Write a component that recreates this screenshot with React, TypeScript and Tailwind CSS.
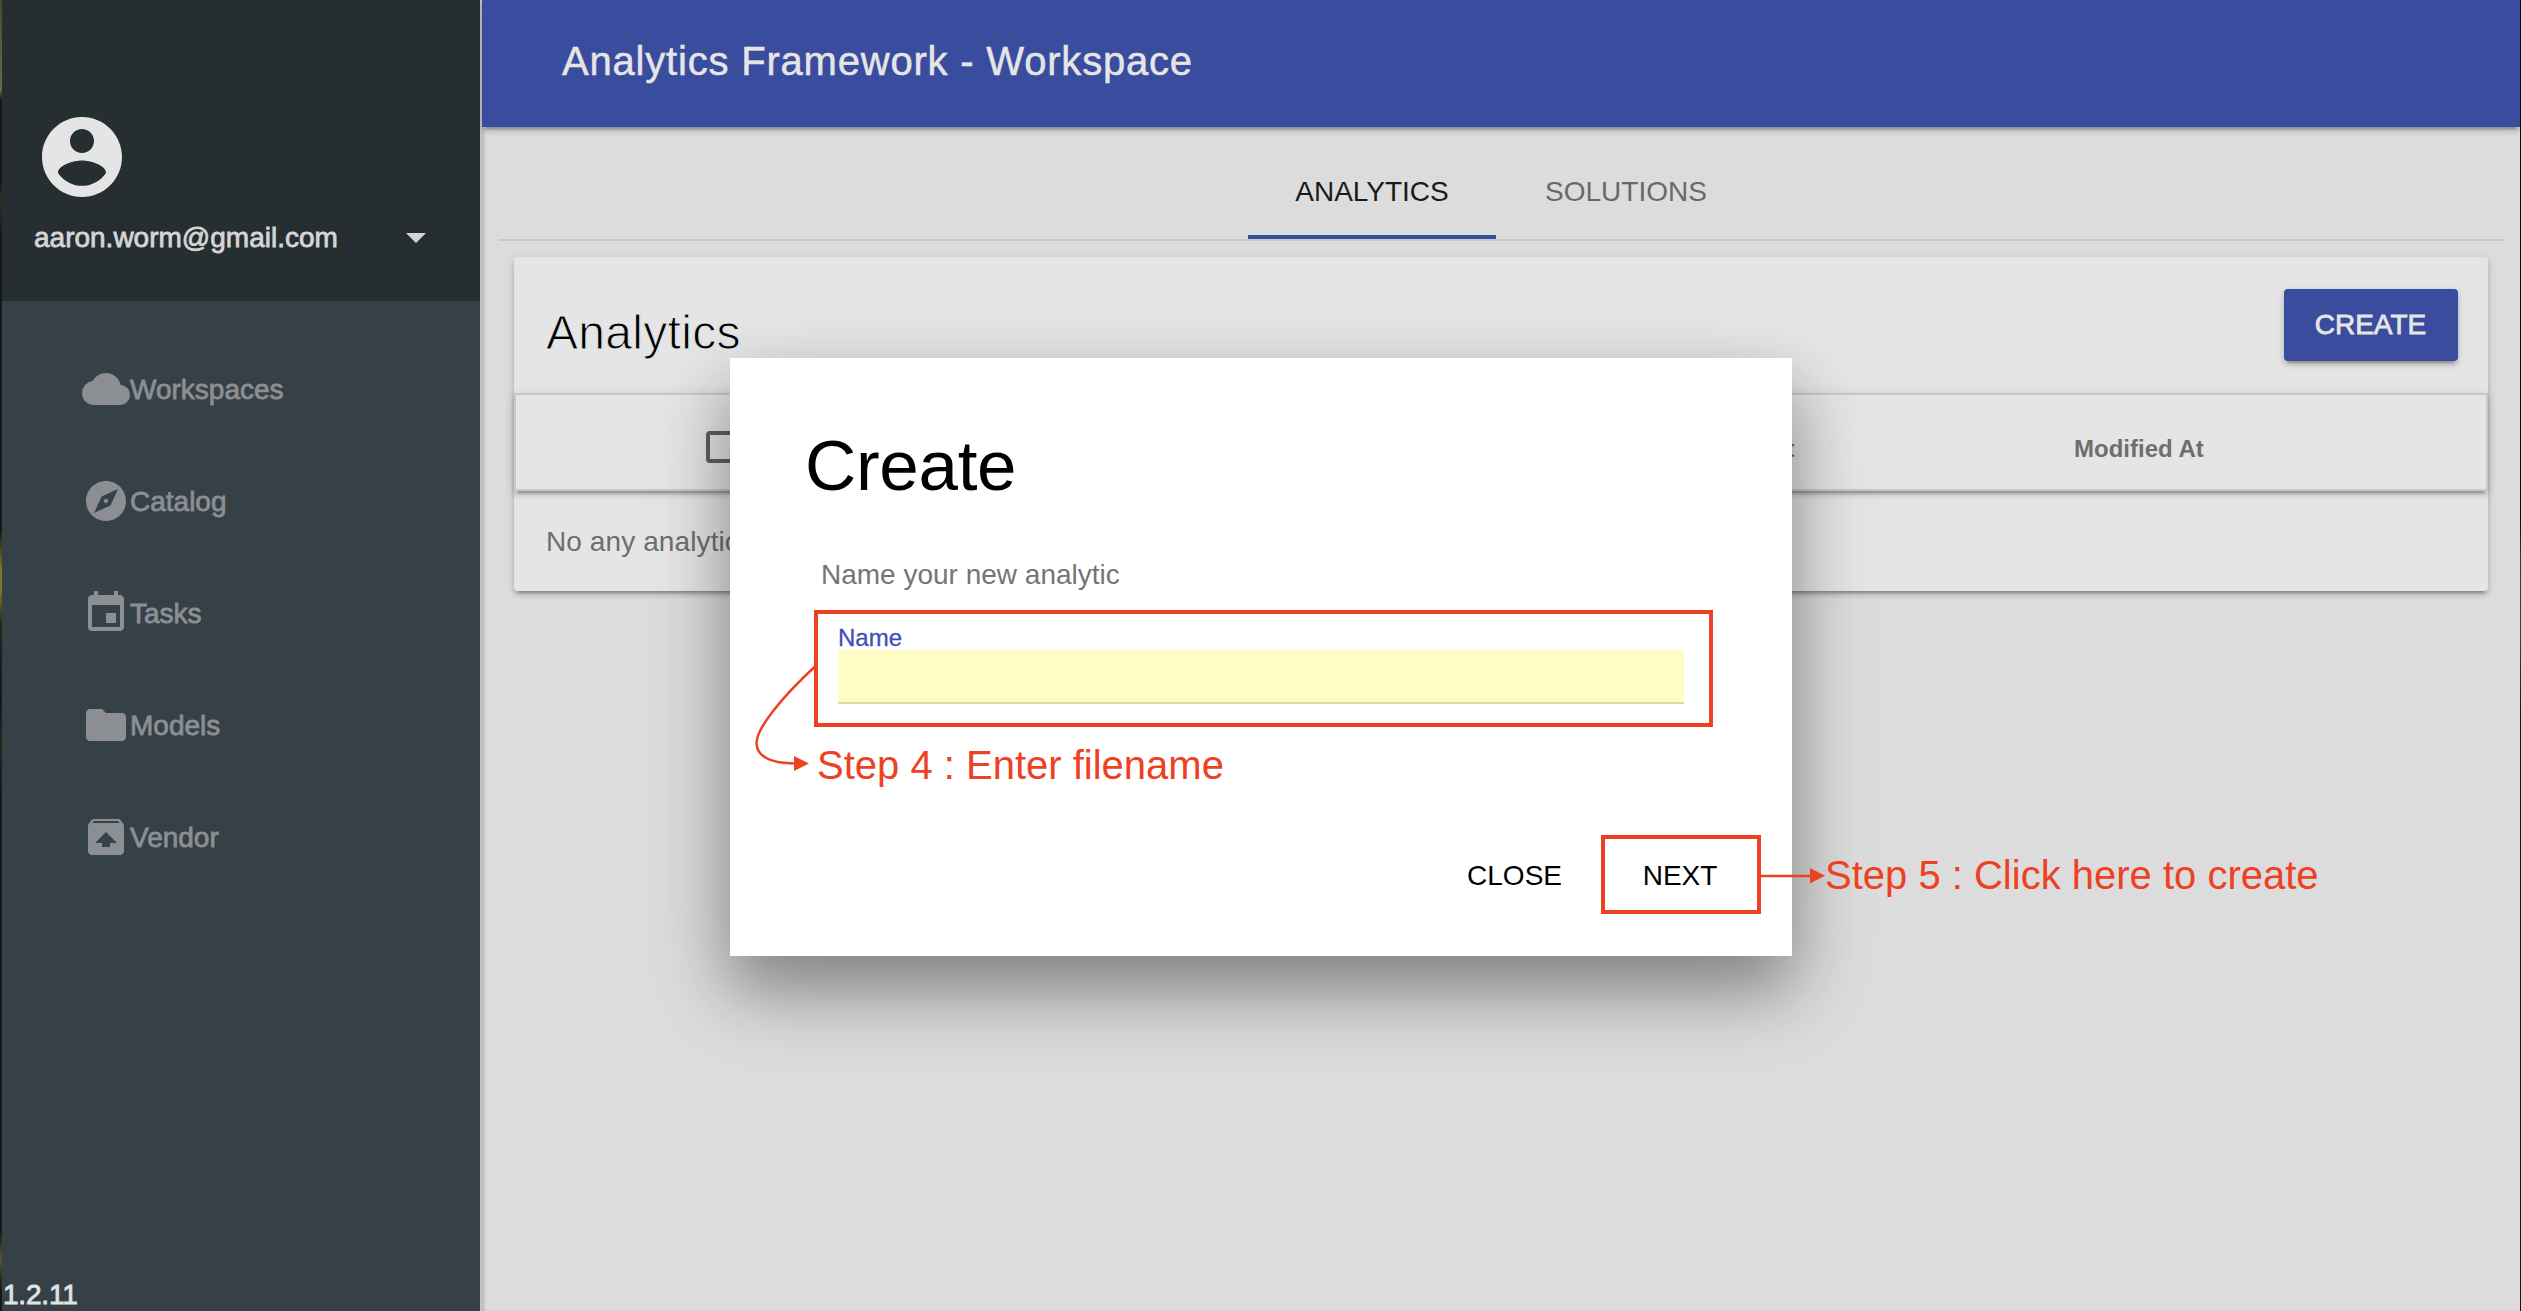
import type { ReactNode, SVGProps } from "react";
import {
  MdArrowDropDown,
  MdCloud,
  MdEvent,
  MdExplore,
  MdFolder,
} from "react-icons/md";

function AccountCircle(props: SVGProps<SVGSVGElement>) {
  return (
    <svg viewBox="0 0 24 24" fill="currentColor" {...props}>
      <path d="M12 2C6.48 2 2 6.48 2 12s4.48 10 10 10 10-4.48 10-10S17.52 2 12 2zm0 3c1.66 0 3 1.34 3 3s-1.34 3-3 3-3-1.34-3-3 1.34-3 3-3zm0 14.2c-2.5 0-4.71-1.28-6-3.22.03-1.99 4-3.08 6-3.08 1.99 0 5.97 1.09 6 3.08-1.29 1.94-3.5 3.22-6 3.22z" />
    </svg>
  );
}

function Unarchive(props: SVGProps<SVGSVGElement>) {
  return (
    <svg viewBox="0 0 24 24" fill="currentColor" {...props}>
      <path d="M20.55 5.22l-1.39-1.68C18.88 3.21 18.47 3 18 3H6c-.47 0-.88.21-1.15.55L3.46 5.22C3.17 5.57 3 6.01 3 6.5V19c0 1.1.89 2 2 2h14c1.1 0 2-.9 2-2V6.5c0-.49-.17-.93-.45-1.28zM12 9.5l5.5 5.5H14v2h-4v-2H6.5L12 9.5zM5.12 5l.82-1h12l.93 1H5.12z" />
    </svg>
  );
}

const navItems = [
  { label: "Workspaces", Icon: MdCloud },
  { label: "Catalog", Icon: MdExplore },
  { label: "Tasks", Icon: MdEvent },
  { label: "Models", Icon: MdFolder },
  { label: "Vendor", Icon: Unarchive },
];

function Sidebar() {
  return (
    <aside className="flex w-[478px] shrink-0 flex-col bg-[#364047]">
      <div className="h-[301px] bg-[#262e31] pt-[109px] pl-8">
        <AccountCircle className="size-24 text-[#e5e5e5]" />
        <div className="mt-2 flex h-12 items-center text-[#d4d5d6]">
          <span className="w-[358px] pt-px text-[28px] leading-8 [-webkit-text-stroke:0.8px_#d4d5d6]">
            aaron.worm@gmail.com
          </span>
          <MdArrowDropDown className="size-12" />
        </div>
      </div>
      <nav className="pt-8 pl-20 text-[#8b8f93]">
        {navItems.map(({ label, Icon }) => (
          <a key={label} className="flex h-28 items-center">
            <Icon className="size-12" />
            <span className="pt-px text-[28px] leading-8 [-webkit-text-stroke:0.8px_#8b8f93]">{label}</span>
          </a>
        ))}
      </nav>
      <div className="mt-auto pl-px text-[28px] leading-8 tracking-[-0.2px] text-[#e2e2e2] [-webkit-text-stroke:0.8px_#e2e2e2]">
        1.2.11
      </div>
    </aside>
  );
}

function Tab({ active, children }: { active?: boolean; children: ReactNode }) {
  return (
    <div
      className={
        active
          ? "flex h-full w-[248px] items-center justify-center border-b-4 border-[#394c9d] pt-[21px] text-[#1a1a1a]"
          : "flex h-full w-[258px] items-center justify-center pt-[17px] pl-0.5 text-[#696969]"
      }
    >
      <span className="text-[28px] leading-8">{children}</span>
    </div>
  );
}

function Workspace() {
  return (
    <main className="flex min-w-0 flex-1 flex-col bg-[#dcdcdc] shadow-[inset_3px_0_4px_-2px_rgba(0,0,0,0.25)]">
      <header className="relative flex h-[127px] items-center bg-[#394c9d] pl-20 shadow-[0_4px_4px_rgba(0,0,0,0.14),0_2px_10px_rgba(0,0,0,0.12),0_6px_2px_-4px_rgba(0,0,0,0.2)]">
        <h1 className="-mt-1.5 text-[40px] leading-[48px] tracking-[0.8px] text-[#e5e5e5] [-webkit-text-stroke:0.5px_#e5e5e5]">
          Analytics Framework - Workspace
        </h1>
      </header>
      <div className="mr-4 ml-4 flex h-[114px] justify-center border-b-2 border-[#c8c8c8]">
        <Tab active>ANALYTICS</Tab>
        <Tab>SOLUTIONS</Tab>
      </div>
      <section className="mt-4 mr-8 ml-8 h-[334px] rounded-[4px] bg-[#e5e5e5] shadow-[0_4px_4px_rgba(0,0,0,0.14),0_2px_10px_rgba(0,0,0,0.12),0_6px_2px_-4px_rgba(0,0,0,0.2)]">
        <div className="flex h-[136px] items-start justify-between pt-8 pr-[30px] pl-8">
          <h2 className="mt-4 text-[48px] leading-[56px] tracking-[0.3px] text-black [-webkit-text-stroke:1px_#e5e5e5]">
            Analytics
          </h2>
          <button className="h-[72px] w-[174px] rounded-[4px] bg-[#394c9d] pr-px text-[28px] leading-8 text-[#e5e5e5] shadow-[0_4px_4px_rgba(0,0,0,0.14),0_2px_10px_rgba(0,0,0,0.12),0_6px_2px_-4px_rgba(0,0,0,0.2)] [-webkit-text-stroke:0.8px_#e5e5e5]">
            CREATE
          </button>
        </div>
        <div className="flex h-[98px] items-center border-2 border-[#c8c8c8] pl-[190px] text-2xl leading-7 font-bold text-[#6e6e6e] shadow-[0_4px_4px_rgba(0,0,0,0.14),0_2px_10px_rgba(0,0,0,0.12),0_6px_2px_-4px_rgba(0,0,0,0.2)]">
          <span className="mt-2.5 size-8 rounded-[4px] border-4 border-[#606060]" />
          <span className="mt-[13px] ml-[936px] w-[400px]">Created At</span>
          <span className="mt-[13px]">Modified At</span>
        </div>
        <p className="pt-[35px] pl-8 text-[28px] leading-8 tracking-[0.1px] text-[#6e6e6e]">
          No any analytics
        </p>
      </section>
    </main>
  );
}

function CreateDialog() {
  return (
    <div className="absolute top-[358px] left-[730px] flex h-[598px] w-[1062px] flex-col bg-white shadow-[0_32px_56px_rgba(0,0,0,0.23),0_34px_80px_rgba(0,0,0,0.23)]">
      <h2 className="mt-[68px] ml-[75px] text-[71px] leading-[80px] tracking-[-0.3px] text-black">Create</h2>
      <p className="mt-[53px] ml-[91px] text-[28px] leading-8 text-[#757575]">Name your new analytic</p>
      <div className="mt-[19px] ml-[84px] h-[117px] w-[899px] border-4 border-[#ee4023] pt-2.5 pl-5">
        <label className="block text-2xl leading-7 text-[#3f51b5] [-webkit-text-stroke:0.3px_#3f51b5]">Name</label>
        <div className="-mt-0.5 h-[54px] w-[846px] border-b-2 border-[#dadcac] bg-[#fdfdc4]" />
      </div>
      <p className="mt-3.5 ml-[87px] text-[40px] leading-[48px] text-[#ee4023]">Step 4 : Enter filename</p>
      <div className="mt-[46px] mr-[31px] flex items-center justify-end gap-[38px] text-[28px] leading-8 text-black">
        <span className="mr-px pt-0.5">CLOSE</span>
        <span className="flex h-[79px] w-40 items-center justify-center border-4 border-[#ee4023] pt-0.5 pr-0.5">
          NEXT
        </span>
      </div>
    </div>
  );
}

function Annotations() {
  return (
    <>
      <svg className="absolute top-[650px] left-[740px]" width="90" height="130" viewBox="740 650 90 130">
        <path
          d="M816 665.5C780 699 757 728 756.5 743C757 756 770 763.5 796 763.5"
          fill="none"
          stroke="#ee4023"
          strokeWidth="2.5"
        />
        <path d="M794 756L809 763.5L794 771Z" fill="#ee4023" />
      </svg>
      <div className="absolute top-[850px] left-[1761px] flex items-center">
        <svg width="64" height="48" viewBox="0 0 64 48">
          <path d="M0 25H50" stroke="#ee4023" strokeWidth="2.5" />
          <path d="M49 17L64 24.7L49 32.5Z" fill="#ee4023" />
        </svg>
        <span className="pt-px text-[40px] leading-[48px] whitespace-nowrap text-[#ee4023]">
          Step 5 : Click here to create
        </span>
      </div>
    </>
  );
}

export default function App() {
  return (
    <div className="relative flex h-[1311px] w-[2521px] overflow-hidden bg-[#14161a] font-['Liberation_Sans',Arial,sans-serif]">
      <div className="w-0.5 shrink-0 bg-[linear-gradient(#4b4a2a_0,#6b6a3c_90px,#15181a_100px,#15181a_180px,#2d3320_200px,#14161a_240px,#14161a_530px,#7d7a22_570px,#7d7a22_590px,#22261c_625px,#14161a_700px,#22281c_740px,#14161a_800px,#14161a_1230px,#55552c_1258px,#14161a_1290px)]" />
      <Sidebar />
      <div className="w-0.5 shrink-0 bg-[#c4c4c4]" />
      <Workspace />
      <div className="w-px shrink-0 bg-[linear-gradient(#0b0d10_0,#0b0d10_520px,#3a3d10_560px,#3f4210_640px,#14161a_720px)]" />
      <CreateDialog />
      <Annotations />
    </div>
  );
}
